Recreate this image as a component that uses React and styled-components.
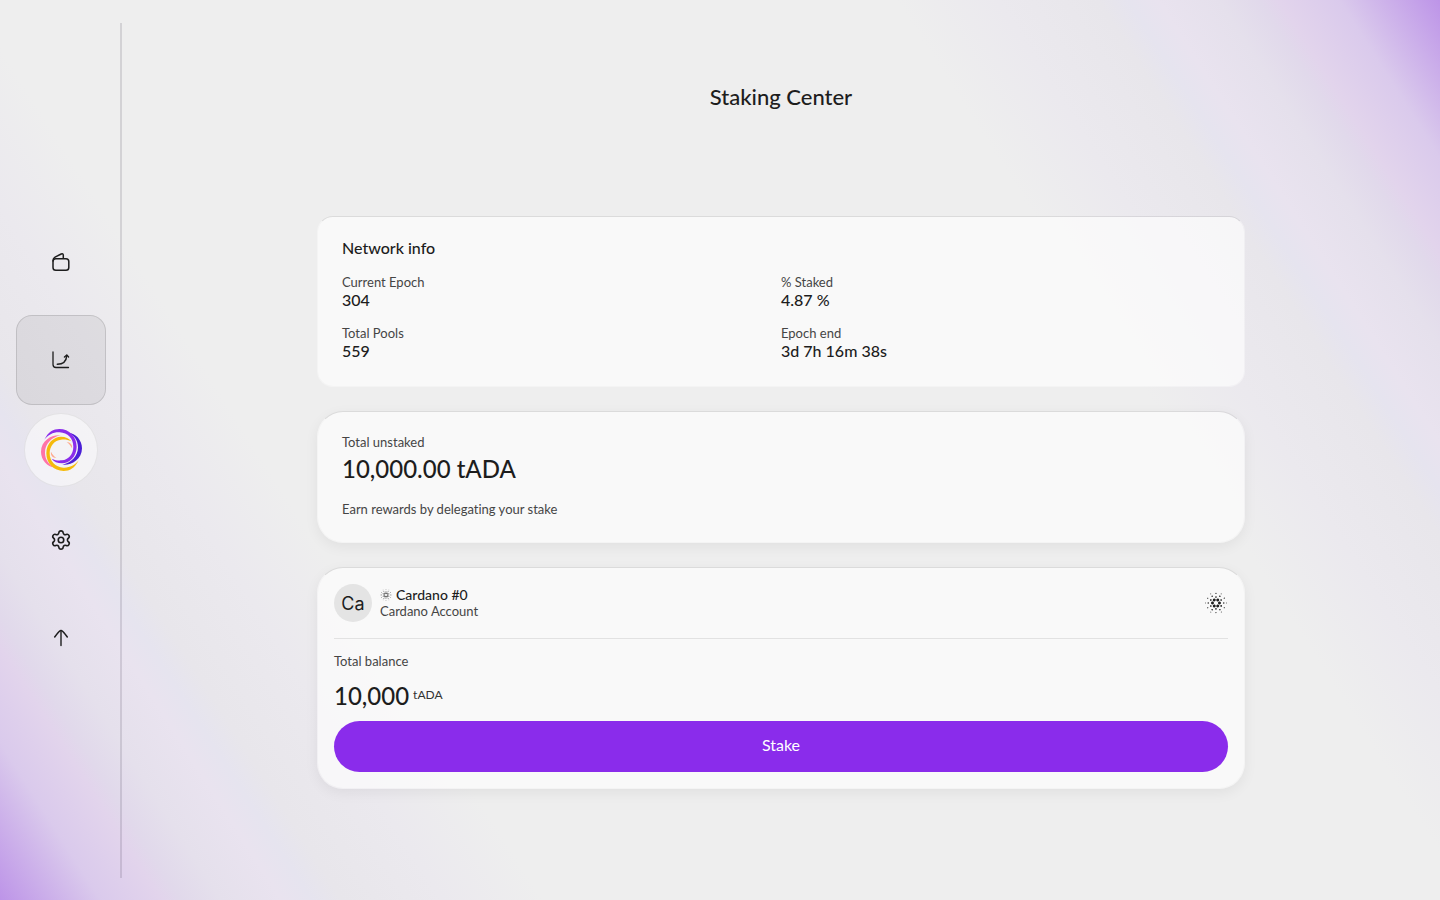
import React from 'react';
import styled, { createGlobalStyle } from 'styled-components';
import { Settings } from 'lucide-react';
import { SiCardano } from 'react-icons/si';

const GlobalStyle = createGlobalStyle`
  * {
    box-sizing: border-box;
  }

  body {
    margin: 0;
    color: #1d1d1d;
    font-family: Lato, 'Open Sans', sans-serif;
    font-variant-ligatures: none;
  }

  h1, h2, p, dl, dd {
    margin: 0;
  }
`;

const Page = styled.div`
  display: flex;
  min-height: 100vh;
  background: linear-gradient(
    57.5deg,
    #bd94e8 0%,
    #dacaec 5%,
    #e2d4ec 8%,
    #e1d9eb 9%,
    #e5e0ec 11%,
    #e9e3ef 14%,
    #e6e4ef 15.5%,
    #e8e6eb 17%,
    #ebe9ee 22%,
    #eeeeee 27%,
    #eeeeee 73%,
    #ebe9ee 78%,
    #e8e6eb 83%,
    #e6e4ef 84.5%,
    #e9e3ef 86%,
    #e5e0ec 89%,
    #e1d9eb 91%,
    #e2d4ec 92%,
    #dacaec 95%,
    #bd94e8 100%
  );
`;

const Sidebar = styled.nav`
  display: flex;
  flex-direction: column;
  align-items: center;
  justify-content: center;
  gap: 8px;
  width: 122px;
  flex-shrink: 0;
`;

const Divider = styled.div`
  width: 2px;
  margin: 23px 0 22px -2px;
  background: rgba(30, 20, 50, 0.13);
`;

const NavLink = styled.a`
  display: flex;
  align-items: center;
  justify-content: center;
  width: 90px;
  height: 90px;
  border: 1px solid ${({ $active }) => ($active ? 'rgba(0, 0, 0, 0.12)' : 'transparent')};
  border-radius: 16px;
  background: ${({ $active }) => ($active ? 'rgba(0, 0, 0, 0.06)' : 'none')};
  color: #1d1d1d;
`;

const LogoLink = styled.a`
  display: flex;
  align-items: center;
  justify-content: center;
  width: 74px;
  height: 74px;
  border: 1px solid rgba(0, 0, 0, 0.07);
  border-radius: 50%;
  background: rgba(255, 255, 255, 0.5);
`;

const Main = styled.main`
  flex: 1;
  display: flex;
  flex-direction: column;
  align-items: center;
  padding: 80px 24px 24px;
`;

const Title = styled.h1`
  margin-bottom: 102px;
  font-size: 22px;
  font-weight: 500;
  line-height: 34px;
`;

const Cards = styled.div`
  display: flex;
  flex-direction: column;
  gap: 24px;
  width: 100%;
  max-width: 928px;
`;

const Card = styled.section`
  padding: ${({ $padding }) => $padding};
  border: 1px solid rgba(255, 255, 255, 0.35);
  border-top-color: rgba(0, 0, 0, 0.08);
  border-radius: ${({ $raised }) => ($raised ? '26px' : '16px')};
  background: rgba(255, 255, 255, 0.65);
  background-clip: padding-box;
  box-shadow: ${({ $raised }) => ($raised ? '0 4px 14px rgba(0, 0, 0, 0.06)' : 'none')};
`;

const CardTitle = styled.h2`
  margin-bottom: 18px;
  font-size: 16px;
  font-weight: 500;
  line-height: 16px;
`;

const Stats = styled.dl`
  display: grid;
  grid-template-columns: 1fr 1fr;
  row-gap: 17px;
`;

const Label = styled.p`
  color: #454545;
  font-size: 13px;
  line-height: 17px;
`;

const Value = styled.dd`
  font-size: 16px;
  font-weight: 500;
  line-height: 17px;
`;

const Amount = styled.p`
  font-size: 24px;
  font-weight: 500;
  line-height: 36px;
`;

const Hint = styled(Label)`
  margin-top: 14px;
`;

const Account = styled.header`
  display: flex;
  align-items: center;
  gap: 8px;
  padding-bottom: 16px;
  border-bottom: 1px solid #e2e2e2;
`;

const Avatar = styled.div`
  display: flex;
  align-items: center;
  justify-content: center;
  width: 38px;
  height: 38px;
  border-radius: 50%;
  background: #e4e4e4;
  font-family: Inter, sans-serif;
  font-size: 18px;
`;

const AccountInfo = styled.div`
  flex: 1;
`;

const AccountName = styled.p`
  display: flex;
  align-items: center;
  gap: 4px;
  font-size: 14px;
  font-weight: 500;
  line-height: 16px;

  svg {
    color: #444;
  }
`;

const NetworkIcon = styled.div`
  display: flex;
  padding: 0 1px;
`;

const Balance = styled.div`
  display: flex;
  gap: 4px;
  margin: 8px 0 7px;
`;

const Unit = styled.span`
  color: #333;
  font-size: 12px;
  line-height: 34px;
`;

const BalanceLabel = styled(Label)`
  margin-top: 14px;
`;

const Button = styled.button`
  display: block;
  width: 100%;
  height: 51px;
  padding: 0 0 5px;
  border: none;
  border-radius: 26px;
  background: #8a2ceb;
  color: #fff;
  font-family: inherit;
  font-size: 16px;
`;

const Stroke = styled.svg`
  fill: none;
  stroke: currentColor;
  stroke-width: 1.5;
  stroke-linecap: round;
  stroke-linejoin: round;
`;

const WalletIcon = () => (
  <Stroke width="20" height="20" viewBox="0 0 20 20">
    <rect x="2" y="6.8" width="15.8" height="11.4" rx="2.8" />
    <path d="M2 9C2 6.8 2.4 5.9 4 5.1L10.2 2C11.4 1.4 12.3 1.8 12.3 3.2V6.3" />
  </Stroke>
);

const ChartIcon = () => (
  <Stroke width="20" height="20" viewBox="0 0 20 20">
    <path d="M2 2V14.5C2 16.8 3 17.5 5 17.5H17.5" strokeWidth="1.3" />
    <path d="M6.3 14.3C12 14.3 15.3 11.5 15.8 5.5" />
    <path d="M13.4 7L15.8 5L17.6 7" strokeWidth="1.3" />
  </Stroke>
);

const ArrowIcon = () => (
  <Stroke width="20" height="20" viewBox="0 0 20 20">
    <path d="M10 17.5V2.8" strokeWidth="1.4" />
    <path d="M3.7 9C5.5 6.5 8 3.2 9.2 2.7C9.7 2.4 10.3 2.4 10.8 2.7C12 3.2 14.5 6.5 16.3 9" />
  </Stroke>
);

const RINGS = [
  {
    d: 'M137 91C115 87 78 104 78 140C78 165 97 186 119 187C102 180 90 164 90 143C90 116 111 96 137 91Z',
    colors: ['#ff73a8', '#4a1fd6'],
  },
  {
    d: 'M155 111C166 112 173 119 171 130C167 122 162 116 155 111Z',
    colors: ['#ffa98c', '#ffa98c'],
  },
  {
    d: 'M88 104C100 80 115 72 133 72C163 72 185 95 185 125C185 155 163 175 141 175C128 175 116 170 110 161C120 166 130 167 141 166C160 164 175 148 175 125C175 101 158 83 134 82C115 81 100 89 88 104Z',
    colors: ['#8a2ceb', '#f5ba0b'],
  },
];

const Logo = () => (
  <svg width="43" height="44" viewBox="75 69 129 132">
    {RINGS.map(({ d, colors }) => (
      <g key={d}>
        <path d={d} fill={colors[0]} />
        <path d={d} fill={colors[1]} transform="rotate(180 139.5 135)" />
      </g>
    ))}
  </svg>
);

const Stat = ({ label, value }) => (
  <div>
    <Label as="dt">{label}</Label>
    <Value>{value}</Value>
  </div>
);

export default function App() {
  return (
    <>
      <GlobalStyle />
      <Page>
        <Sidebar>
          <NavLink href="#wallet" aria-label="Wallet">
            <WalletIcon />
          </NavLink>
          <NavLink href="#staking" aria-label="Staking" $active>
            <ChartIcon />
          </NavLink>
          <LogoLink href="#home" aria-label="Home">
            <Logo />
          </LogoLink>
          <NavLink href="#settings" aria-label="Settings">
            <Settings size={22} strokeWidth={1.75} />
          </NavLink>
          <NavLink href="#send" aria-label="Send">
            <ArrowIcon />
          </NavLink>
        </Sidebar>
        <Divider />
        <Main>
          <Title>Staking Center</Title>
          <Cards>
            <Card $padding="23px 24px 27px">
              <CardTitle>Network info</CardTitle>
              <Stats>
                <Stat label="Current Epoch" value="304" />
                <Stat label="% Staked" value="4.87 %" />
                <Stat label="Total Pools" value="559" />
                <Stat label="Epoch end" value="3d 7h 16m 38s" />
              </Stats>
            </Card>
            <Card $padding="22px 24px 24px" $raised>
              <Label>Total unstaked</Label>
              <Amount>10,000.00 tADA</Amount>
              <Hint>Earn rewards by delegating your stake</Hint>
            </Card>
            <Card $padding="16px" $raised>
              <Account>
                <Avatar>Ca</Avatar>
                <AccountInfo>
                  <AccountName>
                    <SiCardano size={12} />
                    Cardano #0
                  </AccountName>
                  <Label>Cardano Account</Label>
                </AccountInfo>
                <NetworkIcon>
                  <SiCardano size={22} />
                </NetworkIcon>
              </Account>
              <BalanceLabel>Total balance</BalanceLabel>
              <Balance>
                <Amount>10,000</Amount>
                <Unit>tADA</Unit>
              </Balance>
              <Button type="button">Stake</Button>
            </Card>
          </Cards>
        </Main>
      </Page>
    </>
  );
}
